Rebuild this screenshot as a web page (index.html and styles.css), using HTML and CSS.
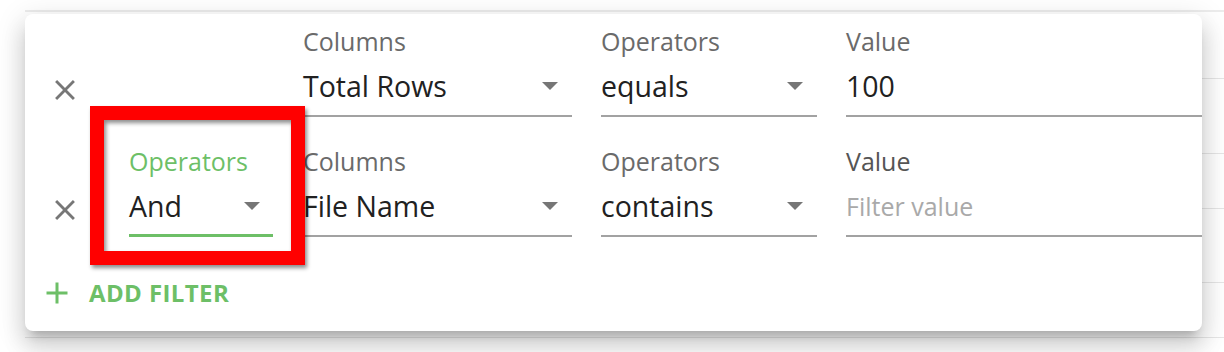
FILE: index.html
```html
<!DOCTYPE html>
<html lang="en">
<head>
<meta charset="utf-8">
<title>Filter panel</title>
<link rel="stylesheet" href="styles.css">
</head>
<body>
<div class="grid-bg">
  <div class="grid-row r1"></div>
  <div class="grid-row r2"></div>
  <div class="grid-row r3"></div>
  <div class="grid-row r4"></div>
  <div class="grid-row r5"></div>
</div>

<div class="panel">
  <div class="filter-row">
    <button class="close" type="button" aria-label="Delete">
      <svg viewBox="0 0 24 24" width="34" height="34"><path d="M19 6.41L17.59 5 12 10.59 6.41 5 5 6.41 10.59 12 5 17.59 6.41 19 12 13.41 17.59 19 19 17.59 13.41 12z"/></svg>
    </button>
    <div class="field link"></div>
    <div class="field columns">
      <div class="field-label">Columns</div>
      <div class="field-input"><span class="val">Total Rows</span><svg class="arrow" viewBox="0 0 16 8" width="16" height="8"><polygon points="0,0 16,0 8,8"/></svg></div>
    </div>
    <div class="field operators">
      <div class="field-label">Operators</div>
      <div class="field-input"><span class="val">equals</span><svg class="arrow" viewBox="0 0 16 8" width="16" height="8"><polygon points="0,0 16,0 8,8"/></svg></div>
    </div>
    <div class="field value">
      <div class="field-label">Value</div>
      <div class="field-input"><span class="val">100</span></div>
    </div>
  </div>

  <div class="filter-row">
    <button class="close" type="button" aria-label="Delete">
      <svg viewBox="0 0 24 24" width="34" height="34"><path d="M19 6.41L17.59 5 12 10.59 6.41 5 5 6.41 10.59 12 5 17.59 6.41 19 12 13.41 17.59 19 19 17.59 13.41 12z"/></svg>
    </button>
    <div class="field link focused">
      <div class="field-label">Operators</div>
      <div class="field-input"><span class="val">And</span><svg class="arrow" viewBox="0 0 16 8" width="16" height="8"><polygon points="0,0 16,0 8,8"/></svg></div>
    </div>
    <div class="field columns">
      <div class="field-label">Columns</div>
      <div class="field-input"><span class="val">File Name</span><svg class="arrow" viewBox="0 0 16 8" width="16" height="8"><polygon points="0,0 16,0 8,8"/></svg></div>
    </div>
    <div class="field operators">
      <div class="field-label">Operators</div>
      <div class="field-input"><span class="val">contains</span><svg class="arrow" viewBox="0 0 16 8" width="16" height="8"><polygon points="0,0 16,0 8,8"/></svg></div>
    </div>
    <div class="field value">
      <div class="field-label dark">Value</div>
      <div class="field-input"><span class="val placeholder">Filter value</span></div>
    </div>
  </div>

  <button class="add" type="button">
    <svg viewBox="0 0 24 24" width="36" height="36"><path d="M19 13h-6v6h-2v-6H5v-2h6V5h2v6h6v2z"/></svg>
    <span>ADD FILTER</span>
  </button>
</div>

<div class="highlight"></div>
</body>
</html>
```

FILE: styles.css
```css
html, body {
  margin: 0;
  padding: 0;
  background: #ffffff;
  width: 1224px;
  height: 352px;
  overflow: hidden;
  font-family: "Open Sans", "Noto Sans", sans-serif;
}

.grid-bg {
  margin-left: 25px;
  padding-top: 10px;
}
.grid-bg .grid-row {
  border-bottom: 1px solid #e6e6e6;
}
.grid-bg .r1 {
  border-top: 2px solid #ececec;
  height: 66px;
}
.grid-bg .r2 { height: 74px; }
.grid-bg .r3 { height: 54px; }
.grid-bg .r4 { height: 73px; }
.grid-bg .r5 { height: 54px; }

.panel {
  position: absolute;
  left: 25px;
  top: 14px;
  width: 1177px;
  height: 317px;
  box-sizing: border-box;
  padding: 11px 0 0 23px;
  background: #ffffff;
  border-radius: 8px;
  overflow: hidden;
  box-shadow: 0 10px 10px -6px rgba(0, 0, 0, 0.2),
              0 16px 22px 2px rgba(0, 0, 0, 0.12),
              0 6px 28px 4px rgba(0, 0, 0, 0.1);
}

.filter-row {
  display: flex;
  align-items: flex-end;
}
.filter-row + .filter-row {
  margin-top: 28px;
}

.close {
  width: 34px;
  height: 34px;
  padding: 0;
  border: 0;
  background: none;
  margin: 0 47px 10px 0;
  flex: none;
}
.close svg {
  display: block;
  fill: #777777;
}

.field {
  display: flex;
  flex-direction: column;
  flex: none;
}
.field.link { width: 144px; }
.field.columns { width: 269px; margin-left: 30px; }
.field.operators { width: 216px; margin-left: 29px; }
.field.value { flex: 1; margin-left: 29px; }

.field-label {
  font-size: 25px;
  line-height: 32px;
  color: #6a6a6a;
}
.field-label.dark { color: #555555; }

.field-input {
  display: flex;
  align-items: center;
  height: 40px;
  margin-top: 9px;
  padding-bottom: 9px;
  border-bottom: 2px solid #a2a2a2;
}
.val {
  font-size: 28.5px;
  line-height: 40px;
  color: #212121;
  white-space: nowrap;
}
.val.placeholder {
  font-size: 25px;
  color: #a9a9a9;
}

.arrow {
  margin-left: auto;
  margin-right: 14px;
  fill: #767676;
  flex: none;
}

.field.focused .field-label { color: #6dbf67; }
.field.focused .field-input {
  padding-bottom: 8px;
  border-bottom: 3px solid #6dbf67;
}
.field.focused .arrow { margin-right: 13px; }

.add {
  display: flex;
  align-items: center;
  margin: 38px 0 0 -9px;
  padding: 0;
  border: 0;
  background: none;
  font-family: inherit;
  font-size: 24px;
  line-height: 32px;
  font-weight: 700;
  letter-spacing: 0.4px;
  color: #6dbf67;
}
.add svg {
  fill: #6dbf67;
  margin-right: 14px;
}

.highlight {
  position: absolute;
  left: 90px;
  top: 106px;
  width: 215px;
  height: 159px;
  box-sizing: border-box;
  border: 14px solid #ff0000;
  box-shadow: 2px 3px 4px rgba(0, 0, 0, 0.45),
              inset 2px 3px 4px rgba(0, 0, 0, 0.45);
}
```
